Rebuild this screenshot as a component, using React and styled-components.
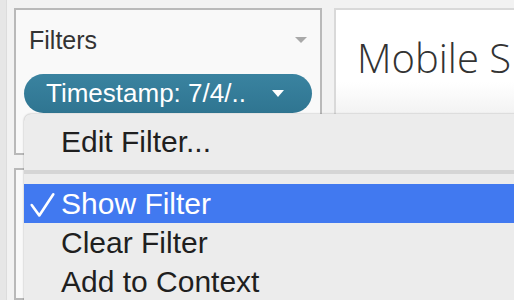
import styled, { createGlobalStyle } from "styled-components";

const GlobalStyle = createGlobalStyle`
    html, body {
        margin: 0;
        padding: 0;
        background: #f2f2f2;
        overflow: hidden;
    }
`;

const Page = styled.div`
    position: relative;
    display: flex;
    width: 514px;
    height: 300px;
    overflow: hidden;
    background: #f2f2f2;
    font-family: "Liberation Sans", Arial, sans-serif;
`;

const Strip = styled.div`
    width: 6px;
    flex: none;
    background: #e6e6e6;
    border-right: 1px solid #dcdcdc;
`;

const Columns = styled.div`
    display: flex;
    gap: 12px;
    padding: 8px 0 0 7px;
`;

const LeftCol = styled.div`
    display: flex;
    flex-direction: column;
    gap: 13px;
    width: 308px;
    flex: none;
`;

const Card = styled.div`
    box-sizing: border-box;
    height: ${({ $height }) => $height}px;
    border: 2px solid #b9b9b9;
    background: #f9f9f9;
`;

const CardHeader = styled.div`
    display: flex;
    align-items: center;
    justify-content: space-between;
    padding: 15px 13px 0 13px;
    height: 30px;
    line-height: 30px;
    font-size: 25px;
    color: #333;
`;

const Caret = styled.span`
    width: 0;
    height: 0;
    border-left: ${({ $w }) => $w / 2}px solid transparent;
    border-right: ${({ $w }) => $w / 2}px solid transparent;
    border-top: ${({ $h }) => $h}px solid ${({ $color }) => $color};
`;

const Pill = styled.div`
    display: flex;
    align-items: center;
    justify-content: space-between;
    margin: 19px 0 0 8px;
    width: 288px;
    height: 39px;
    box-sizing: border-box;
    padding: 0 28px 0 22px;
    border-radius: 20px;
    background: linear-gradient(#3a83a0, #2f7591);
    color: #fff;
    font-size: 26px;
    line-height: 39px;
`;

const TitleCard = styled.div`
    box-sizing: border-box;
    width: 200px;
    height: 120px;
    border: 2px solid #d9d9d9;
    border-right: none;
    background: linear-gradient(#fff 0, #fff 72px, #f1f1f1 108px);
    padding: 23px 0 0 21px;
    white-space: nowrap;
`;

const Title = styled.span`
    font-family: "Open Sans", sans-serif;
    font-weight: 300;
    font-size: 40px;
    line-height: 50px;
    color: #333;
`;

const Menu = styled.div`
    position: absolute;
    left: 24px;
    top: 114px;
    right: -10px;
    bottom: -10px;
    padding-top: 8px;
    background: #ececec;
    border-top-left-radius: 7px;
    box-shadow: 0 0 2px rgba(0, 0, 0, 0.35);
`;

const MenuItem = styled.div`
    display: flex;
    align-items: center;
    height: 39px;
    font-size: 30px;
    line-height: 39px;
    color: ${({ $active }) => ($active ? "#fff" : "#1f1f1f")};
    background: ${({ $active }) => ($active ? "#4179f0" : "transparent")};
`;

const CheckSlot = styled.span`
    display: flex;
    width: 37px;
    height: 39px;
    flex: none;
`;

const Separator = styled.div`
    height: 4px;
    margin: 9px 0 10px;
    background: #d5d5d5;
`;

const items = [
    { label: "Edit Filter..." },
    "sep",
    { label: "Show Filter", checked: true, active: true },
    { label: "Clear Filter" },
    { label: "Add to Context" },
];

export default function App() {
    return (
        <>
            <GlobalStyle />
            <Page>
                <Strip />
                <Columns>
                    <LeftCol>
                        <Card $height={156}>
                            <CardHeader>
                                Filters
                                <Caret $w={13} $h={6} $color="#a9a9a9" />
                            </CardHeader>
                            <Pill>
                                Timestamp: 7/4/..
                                <Caret $w={13} $h={7} $color="#fff" />
                            </Pill>
                        </Card>
                        <Card $height={140} />
                    </LeftCol>
                    <TitleCard>
                        <Title>Mobile S</Title>
                    </TitleCard>
                </Columns>
                <Menu>
                    {items.map((item, i) =>
                        item === "sep" ? (
                            <Separator key={i} />
                        ) : (
                            <MenuItem key={i} $active={item.active}>
                                <CheckSlot>
                                    {item.checked && (
                                        <svg width="37" height="39" viewBox="0 0 37 39">
                                            <polyline
                                                points="7.7,21 15.3,31.5 29.3,10.3"
                                                fill="none"
                                                stroke="#fff"
                                                strokeWidth="2.6"
                                                strokeLinecap="round"
                                                strokeLinejoin="round"
                                            />
                                        </svg>
                                    )}
                                </CheckSlot>
                                {item.label}
                            </MenuItem>
                        )
                    )}
                </Menu>
            </Page>
        </>
    );
}
